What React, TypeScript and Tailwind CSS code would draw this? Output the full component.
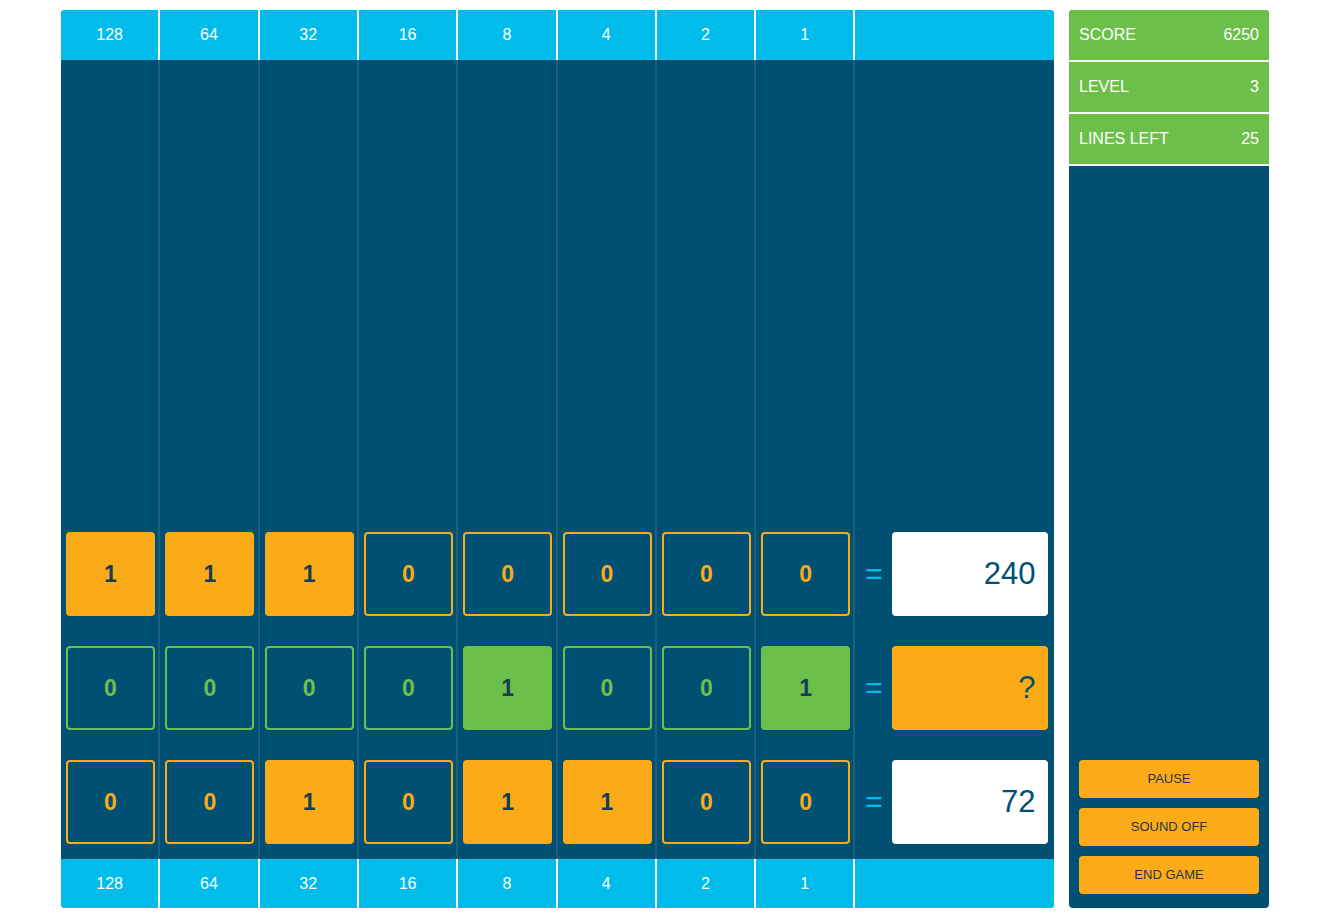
import React from 'react';

const weights = [128, 64, 32, 16, 8, 4, 2, 1];

type Row = {
  color: 'orange' | 'green';
  bits: number[];
  result: string;
  solved: boolean;
};

const rows: Row[] = [
  { color: 'orange', bits: [1, 1, 1, 0, 0, 0, 0, 0], result: '240', solved: true },
  { color: 'green', bits: [0, 0, 0, 0, 1, 0, 0, 1], result: '?', solved: false },
  { color: 'orange', bits: [0, 0, 1, 0, 1, 1, 0, 0], result: '72', solved: true },
];

const Bit: React.FC<{ value: number; color: 'orange' | 'green' }> = ({ value, color }) => {
  const on = value === 1;
  let cls = '';
  if (color === 'orange') {
    cls = on
      ? 'bg-[#fbab18] border-[#fbab18] text-[#173d52]'
      : 'bg-transparent border-[#fbab18] text-[#fbab18]';
  } else {
    cls = on
      ? 'bg-[#6cc04a] border-[#6cc04a] text-[#173d52]'
      : 'bg-transparent border-[#6cc04a] text-[#6cc04a]';
  }
  return (
    <div
      className={`ml-[5px] w-[89px] h-[84px] shrink-0 rounded-[4px] border-2 flex items-center justify-center text-[23px] font-bold ${cls}`}
    >
      {value}
    </div>
  );
};

const WeightBar: React.FC<{ h: string }> = ({ h }) => (
  <div className={`${h} shrink-0 grid grid-cols-[repeat(8,1fr)_2fr] bg-[#00bceb]`}>
    {weights.map((w) => (
      <div
        key={w}
        className="border-r-2 border-white flex items-center justify-center text-white text-[16px]"
      >
        {w}
      </div>
    ))}
    <div />
  </div>
);

const StatRow: React.FC<{ label: string; value: string }> = ({ label, value }) => (
  <div className="h-[52px] border-b-2 border-white bg-[#6cc04a] px-[10px] flex items-center justify-between text-white text-[16px]">
    <span>{label}</span>
    <span>{value}</span>
  </div>
);

const App: React.FC = () => {
  return (
    <div
      className="w-[1330px] h-[924px] bg-white"
      style={{ fontFamily: '"Liberation Sans", Arial, sans-serif' }}
    >
      <div className="mx-auto pt-[10px] w-[1208px] flex gap-[15px]">
        {/* Board */}
        <div className="w-[993px] h-[898px] flex flex-col rounded-[4px] overflow-hidden bg-[#005073]">
          <WeightBar h="h-[50px]" />

          {/* Play area */}
          <div className="flex-1 grid grid-cols-[repeat(8,1fr)_2fr]">
            {weights.map((w, ci) => (
              <div
                key={w}
                className="border-r-2 border-[#1f5e7e] flex flex-col justify-end gap-[30px] pb-[15px]"
              >
                {rows.map((r, ri) => (
                  <Bit key={ri} value={r.bits[ci]} color={r.color} />
                ))}
              </div>
            ))}
            <div className="flex flex-col justify-end gap-[30px] pb-[15px]">
              {rows.map((r, ri) => (
                <div key={ri} className="h-[84px] flex items-center">
                  <div className="w-[37px] text-center text-[#00bceb] text-[30px] leading-none">=</div>
                  <div
                    className={`w-[156px] h-[84px] rounded-[4px] flex items-center justify-end pr-[13px] text-[31px] text-[#005073] ${
                      r.solved ? 'bg-white' : 'bg-[#fbab18]'
                    }`}
                  >
                    {r.result}
                  </div>
                </div>
              ))}
            </div>
          </div>

          <WeightBar h="h-[49px]" />
        </div>

        {/* Side panel */}
        <div className="w-[200px] h-[898px] rounded-[4px] overflow-hidden bg-[#005073] flex flex-col">
          <StatRow label="SCORE" value="6250" />
          <StatRow label="LEVEL" value="3" />
          <StatRow label="LINES LEFT" value="25" />
          <div className="flex-1" />
          <div className="px-[10px] pb-[14px] flex flex-col gap-[10px]">
            {['PAUSE', 'SOUND OFF', 'END GAME'].map((b) => (
              <button
                key={b}
                className="h-[38px] rounded-[4px] bg-[#fbab18] text-[#253746] text-[13px]"
              >
                {b}
              </button>
            ))}
          </div>
        </div>
      </div>
    </div>
  );
};

export default App;
